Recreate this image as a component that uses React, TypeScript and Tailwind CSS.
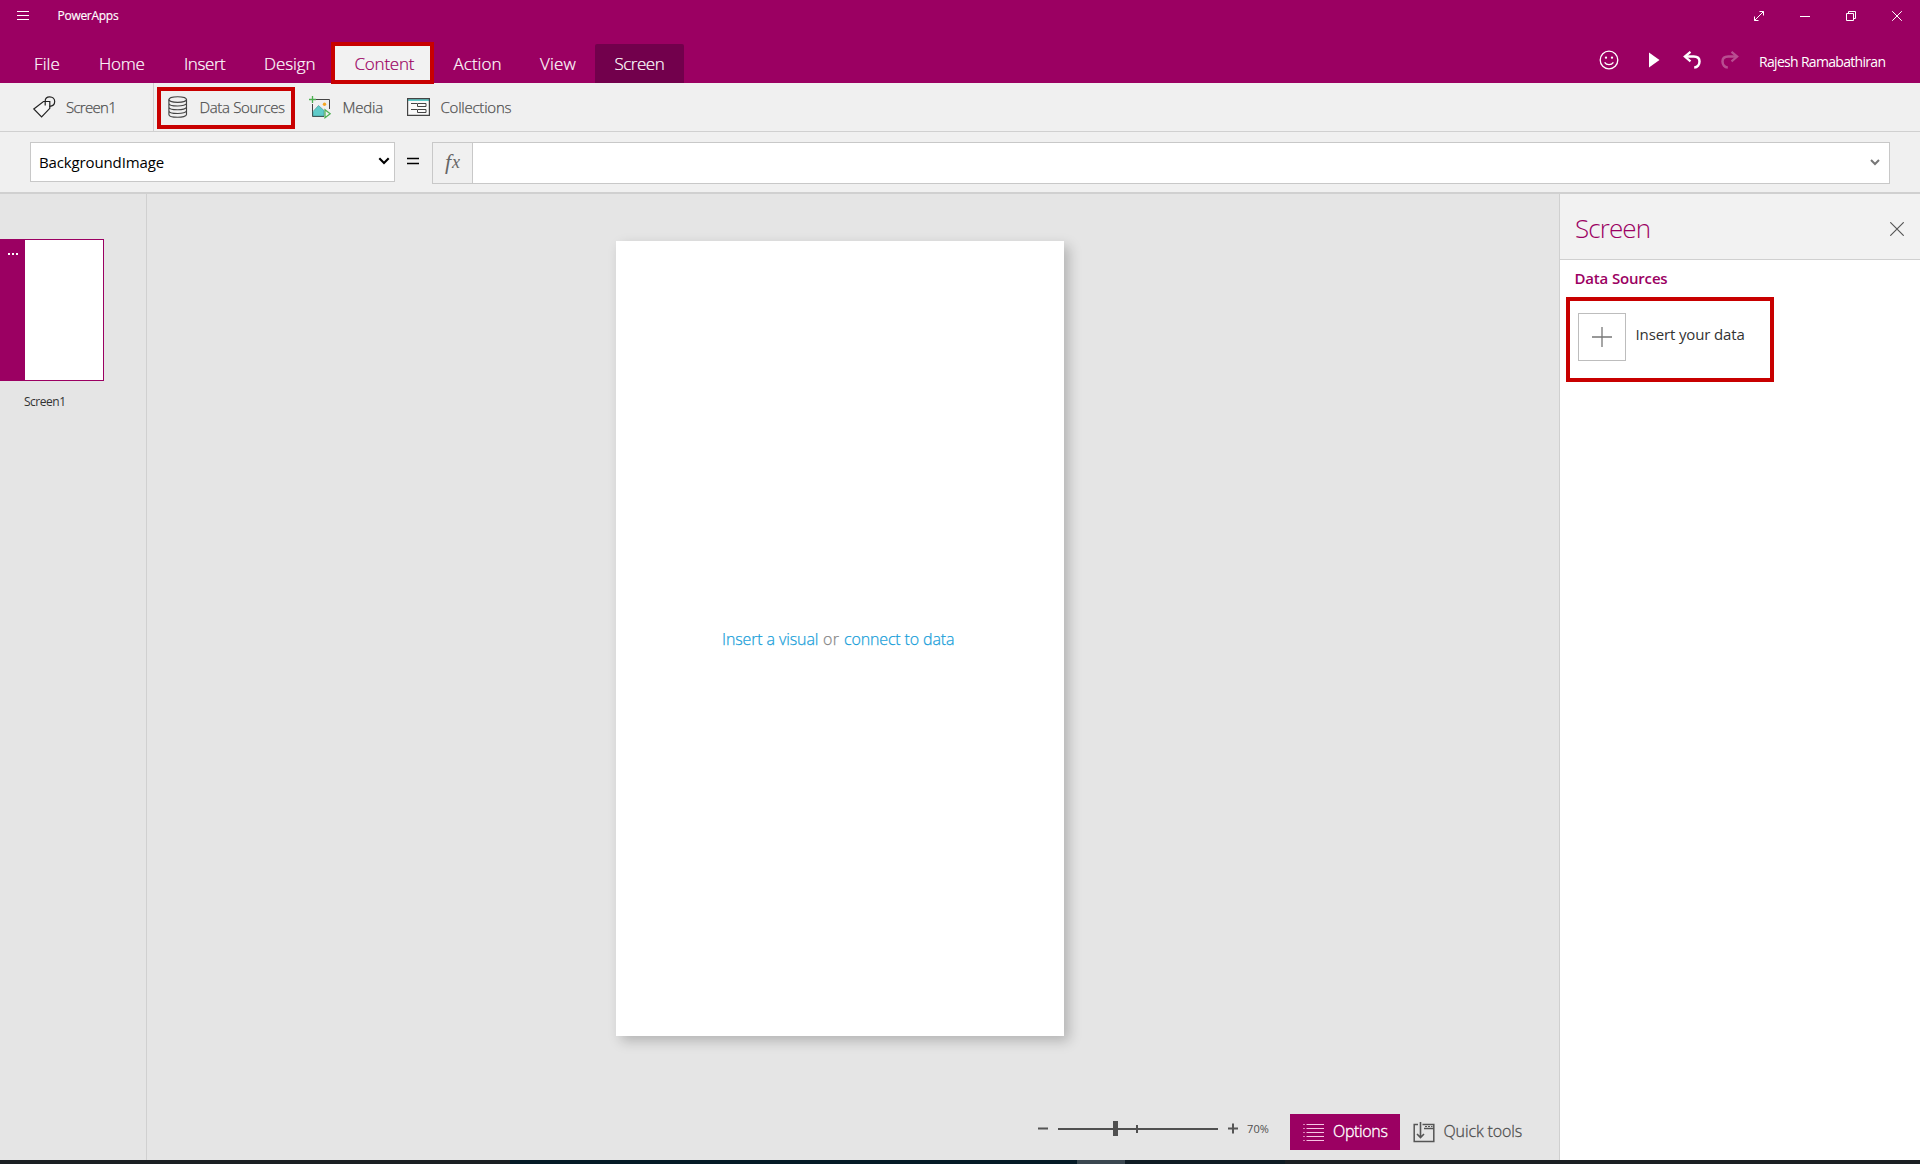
import type { ReactNode } from 'react';

type Tab = { label: string; box: string; active?: boolean; context?: boolean };

const tabs: Tab[] = [
  { label: 'File', box: 'w-[65px] pl-[19px] tracking-[0.1px]' },
  { label: 'Home', box: 'w-[85px] pl-[19px] tracking-[-0.2px]' },
  { label: 'Insert', box: 'w-[80px] pl-[19px] tracking-[-0.42px]' },
  { label: 'Design', box: 'w-[90px] pl-[19px] tracking-[-0.1px]' },
  { label: 'Content', box: 'w-[98px] pl-[19.500px] tracking-[-0.22px]', active: true },
  { label: 'Action', box: 'w-[87px] pl-[20.500px] tracking-[0.05px]' },
  { label: 'View', box: 'w-[75px] pl-[20px] tracking-[0.2px]' },
  { label: 'Screen', box: 'w-[89px] pl-[19.500px] tracking-[-0.5px]', context: true },
];

function Callout({ className }: { className: string }) {
  return <div className={`pointer-events-none absolute z-10 border-4 border-[#c80000] ${className}`} />;
}

function Svg({ w, h, className = '', children }: { w: number; h: number; className?: string; children: ReactNode }) {
  return (
    <svg width={w} height={h} viewBox={`0 0 ${w} ${h}`} fill="none" className={`shrink-0 ${className}`}>
      {children}
    </svg>
  );
}

function TitleBar() {
  return (
    <div className="flex h-8 items-center pl-[17px] pr-[18px] text-white">
      <Svg w={12} h={10}>
        <path d="M0 .5h12M0 4.5h12M0 8.5h12" stroke="#fff" />
      </Svg>
      <span className="ml-[28.500px] text-[12px] tracking-[-0.28px] [-webkit-text-stroke:0.15px]">PowerApps</span>
      <div className="ml-auto flex items-center gap-[36px]">
        <Svg w={10} h={10}>
          <path d="M.5 9.5l9-9M5.5.5h4v4M.5 5.5v4h4" stroke="#fff" />
        </Svg>
        <Svg w={10} h={10}>
          <path d="M0 5.500h10" stroke="#fff" />
        </Svg>
        <Svg w={10} h={10}>
          <path d="M.5 2.500h7v7h-7zM2.500 2.500V.5h7v7h-2" stroke="#fff" />
        </Svg>
        <Svg w={10} h={10}>
          <path d="M.2.2l9.600 9.600M9.800.2L.2 9.800" stroke="#fff" />
        </Svg>
      </div>
    </div>
  );
}

function UndoArrow({ className = '' }: { className?: string }) {
  return (
    <Svg w={18} h={18} className={className}>
      <path d="M7.500.8L1.800 5.600l5.700 4.800" stroke="#fff" strokeWidth="2.200" />
      <path d="M2.500 5.600h8.300c3.500 0 5.700 2 5.700 5s-2 5.700-5.300 5.900" stroke="#fff" strokeWidth="2.500" />
    </Svg>
  );
}

function MenuBar() {
  return (
    <div className="mt-3 flex h-[39px] pl-[15px] text-[17px] font-light text-white">
      {tabs.map((t) => (
        <div
          key={t.label}
          className={`relative flex shrink-0 items-center [-webkit-text-stroke:0.2px] ${t.box} ${
            t.active ? 'bg-[#f2f2f2] text-[#9b0062]' : ''
          } ${t.context ? 'rounded-t-[2px] bg-[#72004c]' : ''}`}
        >
          <span className="mt-px">{t.label}</span>
          {t.active && <Callout className="-left-1 top-[-2px] h-[42px] w-[103px]" />}
        </div>
      ))}
      <div className="-mt-[7px] ml-auto flex items-center pr-[34px]">
        <Svg w={20} h={20}>
          <circle cx="10" cy="10" r="8.800" stroke="#fff" strokeWidth="1.300" />
          <circle cx="7" cy="7.700" r="1.150" fill="#fff" />
          <circle cx="13" cy="7.700" r="1.150" fill="#fff" />
          <path d="M5.600 12.300c2 3 6.800 3 8.800 0" stroke="#fff" strokeWidth="1.300" />
        </Svg>
        <Svg w={11} h={16} className="ml-[30px]">
          <path d="M0 .5L10.500 8 0 15.500z" fill="#fff" />
        </Svg>
        <UndoArrow className="ml-[23px]" />
        <UndoArrow className="ml-[20px] -scale-x-100 opacity-30" />
        <span className="ml-[20px] mt-[3px] w-[127px] whitespace-nowrap text-[14px] font-normal tracking-[-0.69px]">
          Rajesh Ramabathiran
        </span>
      </div>
    </div>
  );
}

function Toolbar() {
  return (
    <div className="flex h-[49px] items-center border-b border-[#d0d0d0] bg-[#f0f0f0] text-[15px] font-light text-[#505050] [-webkit-text-stroke:0.25px]">
      <div className="flex h-full w-[154px] items-center border-r border-[#d0d0d0] pl-[33px]">
        <Svg w={23} h={22}>
          <path d="M.8 13L10.500 5.500h6.300v6.800L8.600 21z" stroke="#222" strokeWidth="1.200" fill="#f6f6f6" />
          <path d="M12.200 9.500V5c0-2.700 2-4.200 4.500-4.200 3 0 5 2.100 5 4.800 0 2.500-2 4.600-5.200 4.700" stroke="#222" strokeWidth="1.200" />
        </Svg>
        <span className="ml-[10px] tracking-[-0.72px]">Screen1</span>
      </div>
      <div className="relative flex h-full w-[141px] items-center pl-[14px]">
        <Svg w={20} h={22}>
          <ellipse cx="9.700" cy="3.500" rx="8.800" ry="2.800" stroke="#444" strokeWidth="1.150" />
          <path
            d="M.9 3.500v15c0 3.700 17.600 3.700 17.600 0v-15M.9 7.200c0 3.700 17.600 3.700 17.600 0M.9 11c0 3.700 17.600 3.700 17.600 0M.9 14.700c0 3.700 17.600 3.700 17.600 0"
            stroke="#444"
            strokeWidth="1.150"
          />
        </Svg>
        <span className="ml-[11.500px] whitespace-nowrap tracking-[-0.35px]">Data Sources</span>
        <Callout className="left-[3px] top-1 h-[42px] w-[138px]" />
      </div>
      <div className="flex w-[112px] items-center pl-[14px]">
        <Svg w={23} h={23}>
          <path d="M7 3.500h13.500V13M3.500 8v12.500H15" stroke="#444" />
          <path d="M4 15.500l5.500-6 5.500 5v5.500H4z" fill="#5fcbc9" stroke="#3e8f8e" strokeWidth=".6" />
          <circle cx="15.500" cy="8.200" r="1.700" fill="#f5a623" />
          <path d="M3.500 0v7M0 3.500h7" stroke="#4caf50" strokeWidth="1.300" />
          <path d="M16 13.800l5.200 4-5.200 4z" fill="#f0f0f0" stroke="#4caf50" strokeWidth="1.200" />
        </Svg>
        <span className="ml-[10.500px] tracking-[-0.19px]">Media</span>
      </div>
      <Svg w={23} h={18}>
        <path d="M1 1h21v16H1z" fill="#fafafa" />
        <path d="M1 1h21v2H1z" fill="#5fcbc9" />
        <path d="M.6.6h21.800v16.800H.6z" stroke="#444" strokeWidth="1.200" />
        <path d="M4 5.500h6M4 11.500h6M10.500 5.500h8.500v3h-8.500zM10.500 11.500h8.500v3h-8.500z" stroke="#444" />
      </Svg>
      <span className="ml-[10.500px] tracking-[-0.23px]">Collections</span>
    </div>
  );
}

function FormulaBar() {
  return (
    <div className="flex h-[62px] border-b-2 border-[#d0d0d0] bg-[#f0f0f0] pl-[30px] pt-[10px]">
      <div className="flex h-[40px] w-[365px] items-center border border-[#c8c8c8] bg-white pl-[8px] pr-[4px] text-[15px] tracking-[-0.13px] text-black">
        BackgroundImage
        <Svg w={12} h={8} className="-mt-[3px] ml-auto">
          <path d="M1.300 1.300L6 6l4.700-4.700" stroke="#000" strokeWidth="2.100" />
        </Svg>
      </div>
      <Svg w={12} h={8} className="ml-[12px] mt-[15px]">
        <path d="M0 1.500h12M0 6.500h12" stroke="#000" strokeWidth="1.400" />
      </Svg>
      <div className="ml-[13px] flex h-[42px] w-[1458px] border border-[#c8c8c8] bg-white">
        <div className="flex w-[40px] shrink-0 items-center justify-center border-r border-[#c8c8c8] bg-[#f0f0f0] font-['Liberation_Serif'] text-[22px] italic text-[#666]">
          <span className="-mt-1">f</span>
          <span className="-mt-[2px] ml-[1px] text-[18px]">x</span>
        </div>
        <Svg w={10} h={7} className="ml-auto mr-[9px] mt-[16px]">
          <path d="M1 1l4 4 4-4" stroke="#777" strokeWidth="2" />
        </Svg>
      </div>
    </div>
  );
}

function ScreenRail() {
  return (
    <div className="w-[147px] shrink-0 border-r border-[#d0d0d0] pt-[45px]">
      <div className="flex h-[142px] w-[104px] border border-l-0 border-[#9b0062] bg-white">
        <div className="flex w-[25px] justify-end gap-[2px] bg-[#9b0062] pr-[7px] pt-[13px]">
          <i className="size-[2px] bg-white" />
          <i className="size-[2px] bg-white" />
          <i className="size-[2px] bg-white" />
        </div>
      </div>
      <div className="ml-[24px] mt-[12px] text-[12px] leading-[18px] tracking-[-0.49px] text-[#333]">Screen1</div>
    </div>
  );
}

function BottomTools() {
  return (
    <div className="mt-[78px] flex h-[36px] items-center pl-[891px]">
      <Svg w={200} h={16} className="-mt-[7px]">
        <path d="M0 7.500h10M190 7.500h10M195 2.500v10" stroke="#555" strokeWidth="2" />
        <path d="M20 8h160" stroke="#505050" strokeWidth="2" />
        <path d="M75 0h5v15h-5zM98 4h2v8h-2z" fill="#505050" />
      </Svg>
      <span className="-mt-[5px] ml-[9px] w-[43px] text-[11px] tracking-[0.1px] text-[#505050]">70%</span>
      <div className="flex h-full w-[110px] items-center bg-[#9b0062] pl-[13px] text-[16px] font-light text-white">
        <Svg w={21} h={19}>
          <path d="M3.500 1.500H21M3.500 5.500H21M3.500 9.500H21M3.500 13.500H21M3.500 17.500H21" stroke="#f7c6e4" />
          <path d="M0 1.500h2M0 5.500h2M0 9.500h2M0 13.500h2M0 17.500h2" stroke="#d87fb5" />
        </Svg>
        <span className="-mt-[3px] ml-[9px] tracking-[-0.35px] [-webkit-text-stroke:0.35px]">Options</span>
      </div>
      <Svg w={22} h={21} className="ml-[13px]">
        <path d="M5 2.500H1.200v17h19.600v-17H9.500M11 6.500h10" stroke="#555" strokeWidth="1.500" />
        <path d="M12 4.500h2M15 4.500h2M18 4.500h1.500" stroke="#555" strokeWidth="1.200" />
        <path d="M7.500 0v15M4 12l3.500 3.500L11 12" stroke="#555" strokeWidth="1.600" />
      </Svg>
      <span className="-mt-[3px] ml-[8.500px] text-[16px] font-light tracking-[-0.12px] text-[#505050] [-webkit-text-stroke:0.3px]">
        Quick tools
      </span>
    </div>
  );
}

function Workspace() {
  return (
    <div className="min-w-0 flex-1 pt-[47px]">
      <div className="ml-[469px] flex h-[795px] w-[448px] items-center whitespace-pre bg-white pl-[106px] text-[16px] font-light text-[#888] shadow-[5px_5px_12px_rgba(0,0,0,0.22)] [-webkit-text-stroke:0.25px]">
        <span className="w-[101px] tracking-[-0.12px] text-[#1a9fda]">Insert a visual</span>
        <span className="w-[21px] tracking-[0.3px]">or</span>
        <span className="tracking-[-0.15px] text-[#1a9fda]">connect to data</span>
      </div>
      <BottomTools />
    </div>
  );
}

function SidePanel() {
  return (
    <div className="w-[361px] shrink-0 border-l border-[#d0d0d0] bg-white">
      <div className="flex h-[66px] items-center justify-between border-b border-[#d0d0d0] bg-[#f2f2f2] pl-[15px] pr-[16px]">
        <span className="mt-[3px] text-[26px] font-light tracking-[-0.9px] text-[#9b0062]">Screen</span>
        <Svg w={14} h={14} className="mt-[5px]">
          <path d="M.3.3l13.400 13.400M13.700.3L.3 13.700" stroke="#555" strokeWidth="1.150" />
        </Svg>
      </div>
      <div className="pl-[14.500px] pt-[7px] text-[15px] font-semibold leading-[22px] tracking-[-0.17px] text-[#9b0062]">
        Data Sources
      </div>
      <div className="relative ml-[6px] mt-[8px] flex h-[85px] w-[208px] pl-[12px] pt-[16px]">
        <div className="flex size-[48px] items-center justify-center border border-[#bdbdbd]">
          <Svg w={20} h={20}>
            <path d="M0 10h20M10 0v20" stroke="#777" strokeWidth="1.300" />
          </Svg>
        </div>
        <span className="ml-[9.500px] mt-[10px] text-[15px] leading-[22px] tracking-[-0.13px] text-[#333]">Insert your data</span>
        <Callout className="inset-0" />
      </div>
    </div>
  );
}

export default function App() {
  return (
    <div className="flex h-[1164px] w-[1920px] flex-col overflow-hidden bg-[#e5e5e5] font-['Open_Sans','Noto_Sans',sans-serif] leading-normal">
      <header className="h-[83px] shrink-0 bg-[#9b0062]">
        <TitleBar />
        <MenuBar />
      </header>
      <Toolbar />
      <FormulaBar />
      <main className="flex h-[966px] shrink-0">
        <ScreenRail />
        <Workspace />
        <SidePanel />
      </main>
      <footer className="flex h-1 shrink-0 bg-[#1b1f23]">
        <div className="ml-[510px] w-[567px] bg-[#051a26]" />
        <div className="w-[48px] bg-[#3a4750]" />
        <div className="w-[160px] bg-[#0f1c24]" />
      </footer>
    </div>
  );
}
